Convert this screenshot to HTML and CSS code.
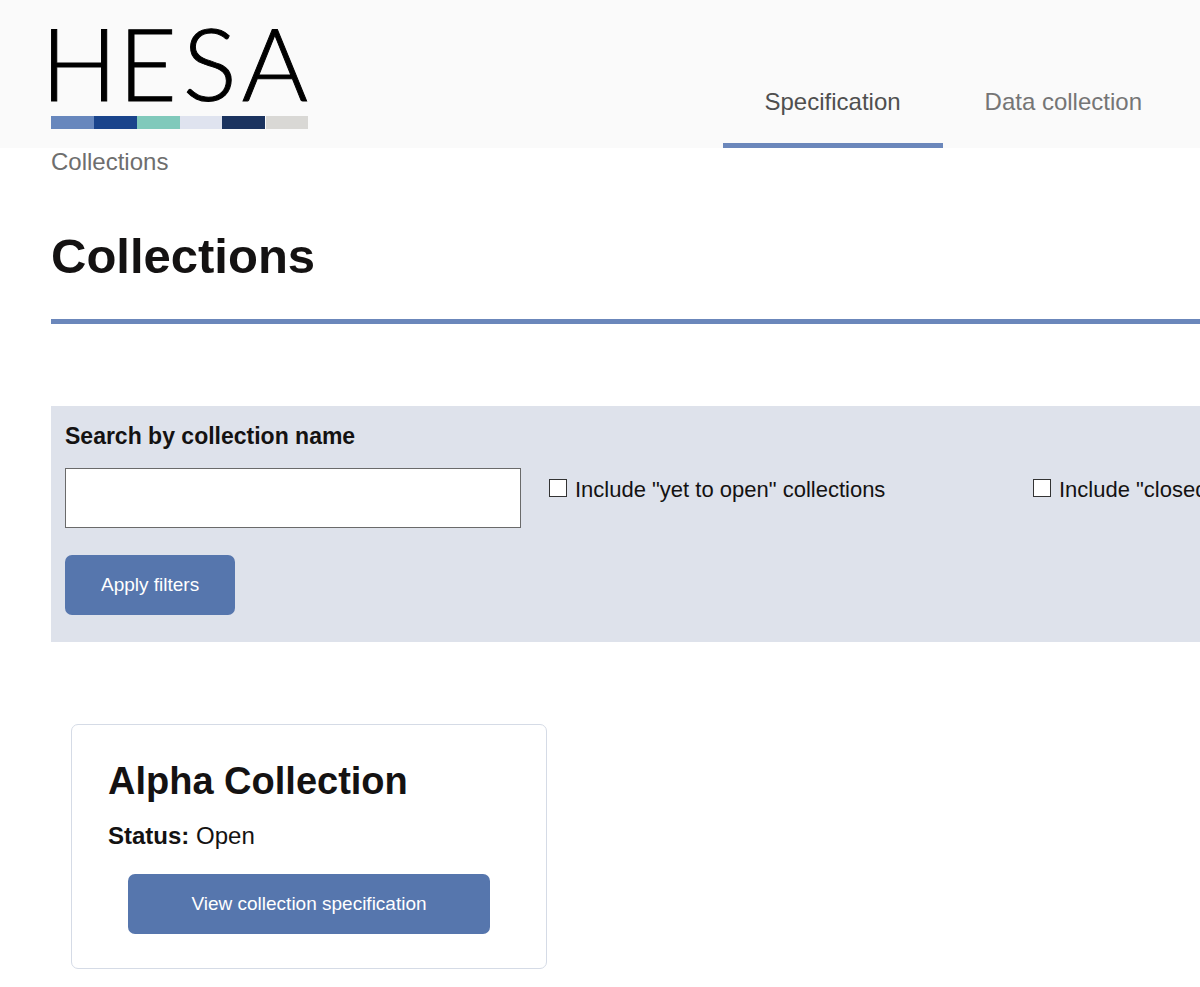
FILE: index.html
```html
<!DOCTYPE html>
<html lang="en">
<head>
<meta charset="utf-8">
<meta name="viewport" content="width=device-width, initial-scale=1">
<title>Collections - HESA</title>
<link rel="stylesheet" href="styles.css">
</head>
<body>
<header class="site-header">
  <a class="logo" href="#" aria-label="HESA home">
    <svg class="logo-image" width="260" height="104" viewBox="0 0 260 104">
      <text class="logo-word" x="-10" y="74" dx="0 1 6 6">HESA</text>
      <rect x="0" y="89" width="43" height="13" fill="#6787bd"/>
      <rect x="43" y="89" width="43" height="13" fill="#1a448c"/>
      <rect x="86" y="89" width="43" height="13" fill="#80c9bb"/>
      <rect x="129" y="89" width="42" height="13" fill="#dfe3ef"/>
      <rect x="171" y="89" width="43" height="13" fill="#1b335f"/>
      <rect x="215" y="89" width="42" height="13" fill="#d9d8d5"/>
    </svg>
  </a>
  <nav class="main-nav" aria-label="Main">
    <a class="nav-link nav-link-active" href="#" aria-current="page">Specification</a>
    <a class="nav-link" href="#">Data collection</a>
  </nav>
</header>
<main class="content">
  <nav class="breadcrumb" aria-label="Breadcrumb"><a href="#">Collections</a></nav>
  <h1 class="page-title">Collections</h1>
  <form class="filters">
    <label class="filter-label" for="name">Search by collection name</label>
    <div class="filter-row">
      <input class="filter-input" id="name" type="text">
      <div class="check">
        <input class="check-box" id="yet" type="checkbox">
        <label for="yet">Include "yet to open" collections</label>
      </div>
      <div class="check">
        <input class="check-box" id="closed" type="checkbox">
        <label for="closed">Include "closed" collections</label>
      </div>
    </div>
    <button class="button" type="button">Apply filters</button>
  </form>
  <article class="card">
    <h2 class="card-title">Alpha Collection</h2>
    <p class="card-status"><strong>Status:</strong> Open</p>
    <a class="button card-button" href="#">View collection specification</a>
  </article>
</main>
</body>
</html>
```
FILE: styles.css
```css
* {
  box-sizing: border-box;
}

body {
  margin: 0;
  overflow-x: hidden;
  background: #fff;
  color: #141212;
  font-family: "Liberation Sans", Arial, sans-serif;
  font-size: 24px;
  line-height: 28px;
}

a {
  text-decoration: none;
}

.site-header {
  display: flex;
  justify-content: space-between;
  padding: 0 16px 0 51px;
  background: #fafafa;
}

.logo {
  padding: 27px 0 17px;
}

.logo-image {
  display: block;
  overflow: visible;
}

.logo-word {
  font-family: Lato, sans-serif;
  font-size: 101px;
  font-weight: 300;
  fill: #000;
  stroke: #000;
  stroke-width: 1px;
}

.main-nav {
  display: flex;
}

.nav-link {
  display: flex;
  align-items: flex-end;
  padding: 0 42px 27px;
  border-bottom: 5px solid transparent;
  color: #757575;
}

.nav-link-active {
  border-color: #6b87bb;
  color: #4f4f4f;
}

.content {
  padding-left: 51px;
}

.breadcrumb a {
  color: #6e6e6e;
}

.page-title {
  margin: 51px 0 82px;
  padding-bottom: 34px;
  border-bottom: 5px solid #6b87bb;
  font-size: 49px;
  line-height: 58px;
}

.filters {
  padding: 16px 14px 27px;
  background: #dee2eb;
}

.filter-label {
  display: block;
  font-size: 23px;
  font-weight: bold;
}

.filter-row {
  display: grid;
  grid-template-columns: repeat(3, 38vw);
  column-gap: 28px;
  margin: 18px 0 27px;
}

.filter-input {
  width: 100%;
  height: 60px;
  padding: 0 14px;
  border: 1px solid #6a6a6a;
  border-radius: 0;
  background: #fff;
  font: inherit;
}

.check {
  display: flex;
  align-items: flex-start;
  gap: 8px;
  padding-top: 8px;
  font-size: 22px;
  white-space: nowrap;
}

.check-box {
  appearance: none;
  width: 18px;
  height: 18px;
  margin: 3px 0 0;
  border: 1px solid #333;
  background: #fff;
}

.check-box:checked {
  background: #5676ad;
}

.button {
  display: inline-block;
  padding: 16px 36px;
  border: 0;
  border-radius: 7px;
  background: #5676ad;
  color: #fff;
  font-family: inherit;
  font-size: 19px;
  line-height: 28px;
  text-align: center;
}

.filters .button {
  display: block;
}

.card {
  width: 476px;
  max-width: 90%;
  margin: 82px 20px 18px;
  padding: 33px 36px 34px;
  border: 1px solid #d5dbe6;
  border-radius: 7px;
}

.card-title {
  margin: 0;
  font-size: 38px;
  line-height: 46px;
}

.card-status {
  margin: 18px 0 24px;
}

.card-button {
  display: block;
  margin: 0 20px;
}
```
